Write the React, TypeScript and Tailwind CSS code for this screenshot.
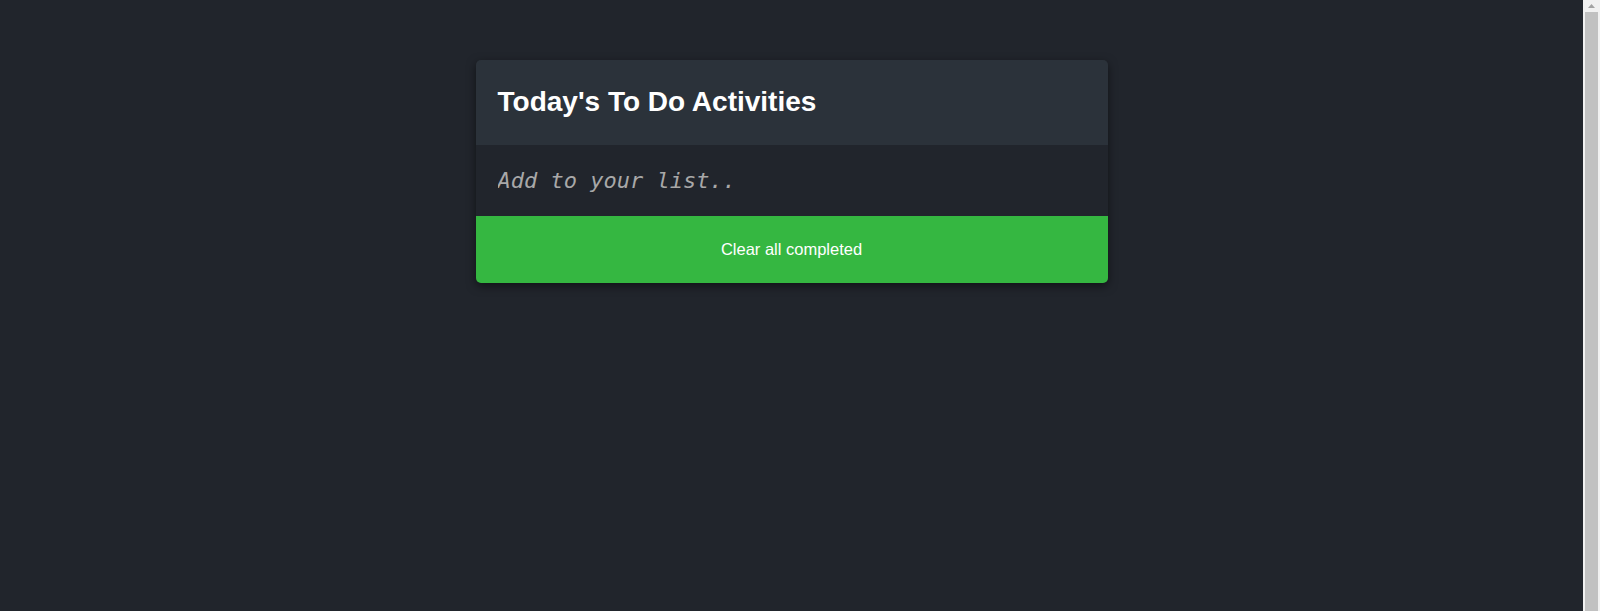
export default function App() {
  return (
    <div className="h-screen w-full flex overflow-hidden bg-[#21252c]">
      <div className="flex-1 flex justify-center pt-[60px]">
        <div className="w-[632px] h-fit rounded-[5px] overflow-hidden shadow-[0_3px_10px_rgba(0,0,0,0.5)]">
          <div className="h-[85px] bg-[#2b323a] px-[22px] flex items-center">
            <h1 className="text-white font-bold text-[28px] font-['Liberation_Sans',Arial,sans-serif] pb-[2px]">
              Today's To Do Activities
            </h1>
          </div>
          <div className="h-[71px] bg-[#21252c] px-[22px] flex items-center">
            <input
              className="w-full bg-transparent outline-none text-[22px] italic text-[#a8a8a8] placeholder:text-[#a8a8a8] font-['DejaVu_Sans_Mono',monospace]"
              placeholder="Add to your list.."
            />
          </div>
          <button className="w-full h-[67px] bg-[#35b741] text-white text-[16.5px] font-['Liberation_Sans',Arial,sans-serif] flex items-center justify-center">
            Clear all completed
          </button>
        </div>
      </div>
      <div className="w-[17px] h-full bg-[#f1f1f1] flex flex-col">
        <div className="h-[12px] flex items-center justify-center">
          <svg width="7" height="4" viewBox="0 0 7 4">
            <path d="M0 4 L3.5 0 L7 4 Z" fill="#a3a3a3" />
          </svg>
        </div>
        <div className="flex-1 mx-[2px] bg-[#c1c1c1]" />
      </div>
    </div>
  );
}
